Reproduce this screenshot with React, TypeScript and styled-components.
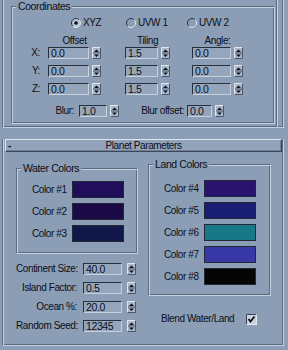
import React from "react";
import styled, { createGlobalStyle } from "styled-components";

const bg = "#8c9eb5";
const hi = "#c6d1de";
const lo = "#5b6b82";
const deep = "#27303d";
const ink = "#0b0e19";

const GlobalStyle = createGlobalStyle`
  html, body { margin: 0; padding: 0; background: ${bg}; }
  body {
    font-family: "Liberation Sans", Arial, sans-serif;
    font-size: 10px;
    letter-spacing: -0.4px;
    line-height: 12px;
    color: ${ink};
  }
  * { box-sizing: border-box; }
`;

const Screen = styled.div`
  width: 288px;
  height: 350px;
  overflow: hidden;
  background: ${bg};
  padding-left: 2px;
  display: flex;
  flex-direction: column;
`;

const Rollout = styled.section<{ $height: number; $gapTop?: number }>`
  width: 282px;
  height: ${(p) => p.$height}px;
  flex: none;
  margin-top: ${(p) => p.$gapTop ?? 0}px;
  border: 1px solid;
  border-top: none;
  border-color: ${lo} ${hi} ${hi} ${lo};
  box-shadow: inset 1px 0 0 ${hi}, inset -1px -1px 0 ${lo};
  display: flex;
  flex-direction: column;
`;

const TopInner = styled.div`
  width: 274px;
  flex: 1;
  padding: 1px 0 0 8px;
  border-right: 1px solid ${lo};
  box-shadow: 1px 0 0 ${hi};
`;

const Group = styled.fieldset<{ $width: number }>`
  margin: 0;
  padding: 0;
  min-width: 0;
  width: ${(p) => p.$width}px;
  border: 1px solid;
  border-color: ${lo} ${hi} ${hi} ${lo};
  box-shadow: inset 1px 1px 0 ${hi}, inset -1px -1px 0 ${lo};
`;

const Caption = styled.legend`
  margin-left: 4px;
  padding: 0 2px;
  height: 11px;
  line-height: 11px;
  font-size: 10.5px;
  background: ${bg};
  white-space: nowrap;
`;

const CoordBody = styled.div`
  padding: 4px 0 6px 0;
  display: flex;
  flex-direction: column;
`;

const RadioRow = styled.div`
  display: grid;
  grid-template-columns: 55px 61px auto;
  padding-left: 59px;
  height: 13px;
  align-items: center;
`;

const RadioItem = styled.div`
  display: flex;
  align-items: center;
  gap: 2px;
  white-space: nowrap;
`;

const AxisGrid = styled.div`
  margin-top: 5px;
  display: grid;
  grid-template-columns: 36px 77px 67px auto;
  grid-template-rows: 13px 18px 18px 12px;
  align-items: start;
`;

const ColHead = styled.div<{ $w: number }>`
  width: ${(p) => p.$w}px;
  text-align: center;
  line-height: 13px;
  white-space: nowrap;
`;

const AxisLabel = styled.div`
  text-align: right;
  padding-right: 8px;
  line-height: 12px;
`;

const BlurRow = styled.div`
  margin-top: 10px;
  display: flex;
  align-items: center;
  height: 12px;
`;

const InlineLabel = styled.div<{ $w: number; $pr?: number }>`
  width: ${(p) => p.$w}px;
  text-align: right;
  padding-right: ${(p) => p.$pr ?? 3}px;
  white-space: nowrap;
  line-height: 12px;
`;

const FieldWrap = styled.div<{ $gap?: number; $ml?: number }>`
  display: flex;
  align-items: center;
  gap: ${(p) => p.$gap ?? 3}px;
  margin-left: ${(p) => p.$ml ?? 0}px;
`;

const FieldBox = styled.div<{ $w: number }>`
  width: ${(p) => p.$w}px;
  height: 12px;
  border: 1px solid;
  border-color: ${deep} ${hi} ${hi} ${deep};
  background: #95a6bc;
  padding-left: 2px;
  line-height: 10px;
  font-size: 10.5px;
  overflow: hidden;
  white-space: nowrap;
`;

const SpinSvg = styled.svg`
  display: block;
  flex: none;
`;

const RolloutHeader = styled.div`
  margin-left: 2px;
  width: 277px;
  height: 13px;
  flex: none;
  border: 1px solid;
  border-color: #dde5ee #3c4657 #3c4657 #dde5ee;
  box-shadow: inset -1px -1px 0 #71819a;
  background: #92a3b9;
  display: grid;
  grid-template-columns: 22px 1fr 22px;
  align-items: center;
  line-height: 11px;
`;

const Toggle = styled.span`
  padding-left: 2px;
  font-weight: bold;
`;

const HeaderTitle = styled.span`
  text-align: center;
  white-space: nowrap;
`;

const PlanetBody = styled.div`
  display: flex;
  gap: 10px;
  padding-left: 13px;
  align-items: flex-start;
`;

const Column = styled.div<{ $top: number; $w: number }>`
  margin-top: ${(p) => p.$top}px;
  width: ${(p) => p.$w}px;
  display: flex;
  flex-direction: column;
`;

const SwatchList = styled.div<{ $pt: number; $pb: number }>`
  display: flex;
  flex-direction: column;
  gap: 5px;
  padding: ${(p) => p.$pt}px 0 ${(p) => p.$pb}px 15px;
`;

const SwatchRow = styled.div`
  display: grid;
  grid-template-columns: 40px 52px;
  height: 17px;
  align-items: center;
  white-space: nowrap;
`;

const Swatch = styled.div<{ $c: string }>`
  height: 17px;
  background: ${(p) => p.$c};
  border: 1px solid #232836;
`;

const SpinList = styled.div`
  margin-top: 9px;
  display: flex;
  flex-direction: column;
  gap: 7px;
`;

const SpinRow = styled.div`
  display: grid;
  grid-template-columns: 64px auto;
  height: 12px;
  align-items: center;
`;

const BlendRow = styled.div`
  margin-top: 17px;
  padding-left: 13px;
  display: grid;
  grid-template-columns: 85px 11px;
  align-items: center;
  height: 11px;
  white-space: nowrap;
`;

const Spinner: React.FC = () => (
  <SpinSvg width={9} height={12} viewBox="0 0 9 12">
    <rect x={0} y={0} width={9} height={12} fill="#a9b7c8" />
    <path d="M0.5 11.5 V0.5 H8.5" stroke="#dfe6ee" fill="none" />
    <path d="M0.5 11.5 H8.5 V0.5" stroke="#4a5568" fill="none" />
    <path d="M1 6 H8" stroke="#4a5568" />
    <polygon points="2,5 4.5,2.5 7,5" fill="#0b0e19" />
    <polygon points="2,7.5 4.5,10 7,7.5" fill="#0b0e19" />
  </SpinSvg>
);

const SpinField: React.FC<{ value: string; w: number; gap?: number; ml?: number }> = ({ value, w, gap, ml }) => (
  <FieldWrap $gap={gap} $ml={ml}>
    <FieldBox $w={w}>{value}</FieldBox>
    <Spinner />
  </FieldWrap>
);

const Radio: React.FC<{ checked?: boolean }> = ({ checked }) => (
  <svg width={10} height={10} viewBox="0 0 10 10" style={{ display: "block", flex: "none" }}>
    <circle cx={5} cy={5} r={4.5} fill={checked ? "#b8c4d3" : "none"} />
    <path d="M1.8 8.2 A4.5 4.5 0 0 1 8.2 1.8" stroke="#2a3342" strokeWidth={1} fill="none" />
    <path d="M8.2 1.8 A4.5 4.5 0 0 1 1.8 8.2" stroke="#dfe6ee" strokeWidth={1} fill="none" />
    {checked && <circle cx={5} cy={5} r={1.8} fill="#0b0e19" />}
  </svg>
);

const Checkbox: React.FC = () => (
  <svg width={11} height={11} viewBox="0 0 11 11" style={{ display: "block", flex: "none" }}>
    <rect x={0} y={0} width={11} height={11} fill="#c9d2dd" />
    <path d="M0.5 10.5 V0.5 H10.5" stroke="#3a4454" fill="none" />
    <path d="M0.5 10.5 H10.5 V0.5" stroke="#e4eaf0" fill="none" />
    <path d="M2.5 5 L4.5 7.5 L8.5 2.5" stroke="#0b0e19" strokeWidth={1.8} fill="none" />
  </svg>
);

const axes = ["X", "Y", "Z"];
const water = [
  { n: 1, c: "#200e5a" },
  { n: 2, c: "#1c0a46" },
  { n: 3, c: "#111849" },
];
const land = [
  { n: 4, c: "#28146e" },
  { n: 5, c: "#191e73" },
  { n: 6, c: "#197887" },
  { n: 7, c: "#3737a5" },
  { n: 8, c: "#050505" },
];
const params = [
  { label: "Continent Size:", value: "40.0" },
  { label: "Island Factor:", value: "0.5" },
  { label: "Ocean %:", value: "20.0" },
  { label: "Random Seed:", value: "12345" },
];

export default function App() {
  return (
    <>
      <GlobalStyle />
      <Screen>
        <Rollout $height={128}>
          <TopInner>
            <Group $width={264}>
              <Caption>Coordinates</Caption>
              <CoordBody>
                <RadioRow>
                  <RadioItem>
                    <Radio checked />
                    <span>XYZ</span>
                  </RadioItem>
                  <RadioItem>
                    <Radio />
                    <span>UVW 1</span>
                  </RadioItem>
                  <RadioItem>
                    <Radio />
                    <span>UVW 2</span>
                  </RadioItem>
                </RadioRow>
                <AxisGrid>
                  <div />
                  <ColHead $w={53}>Offset</ColHead>
                  <ColHead $w={45}>Tiling</ColHead>
                  <ColHead $w={51}>Angle:</ColHead>
                  {axes.map((a) => (
                    <React.Fragment key={a}>
                      <AxisLabel>{a}:</AxisLabel>
                      <SpinField value="0.0" w={41} />
                      <SpinField value="1.5" w={33} />
                      <SpinField value="0.0" w={39} />
                    </React.Fragment>
                  ))}
                </AxisGrid>
                <BlurRow>
                  <InlineLabel $w={65}>Blur:</InlineLabel>
                  <SpinField value="1.0" w={28} ml={2} />
                  <InlineLabel $w={68}>Blur offset:</InlineLabel>
                  <SpinField value="0.0" w={25} />
                </BlurRow>
              </CoordBody>
            </Group>
          </TopInner>
        </Rollout>

        <Rollout $height={207} $gapTop={11}>
          <RolloutHeader>
            <Toggle>-</Toggle>
            <HeaderTitle>Planet Parameters</HeaderTitle>
            <span />
          </RolloutHeader>
          <PlanetBody>
            <Column $top={11} $w={122}>
              <Group $width={122}>
                <Caption>Water Colors</Caption>
                <SwatchList $pt={7} $pb={11}>
                  {water.map((s) => (
                    <SwatchRow key={s.n}>
                      <span>Color #{s.n}</span>
                      <Swatch $c={s.c} />
                    </SwatchRow>
                  ))}
                </SwatchList>
              </Group>
              <SpinList>
                {params.map((p) => (
                  <SpinRow key={p.label}>
                    <InlineLabel $w={64}>{p.label}</InlineLabel>
                    <SpinField value={p.value} w={39} gap={5} ml={3} />
                  </SpinRow>
                ))}
              </SpinList>
            </Column>
            <Column $top={7} $w={123}>
              <Group $width={123}>
                <Caption>Land Colors</Caption>
                <SwatchList $pt={10} $pb={10}>
                  {land.map((s) => (
                    <SwatchRow key={s.n}>
                      <span>Color #{s.n}</span>
                      <Swatch $c={s.c} />
                    </SwatchRow>
                  ))}
                </SwatchList>
              </Group>
              <BlendRow>
                <span>Blend Water/Land</span>
                <Checkbox />
              </BlendRow>
            </Column>
          </PlanetBody>
        </Rollout>
      </Screen>
    </>
  );
}
